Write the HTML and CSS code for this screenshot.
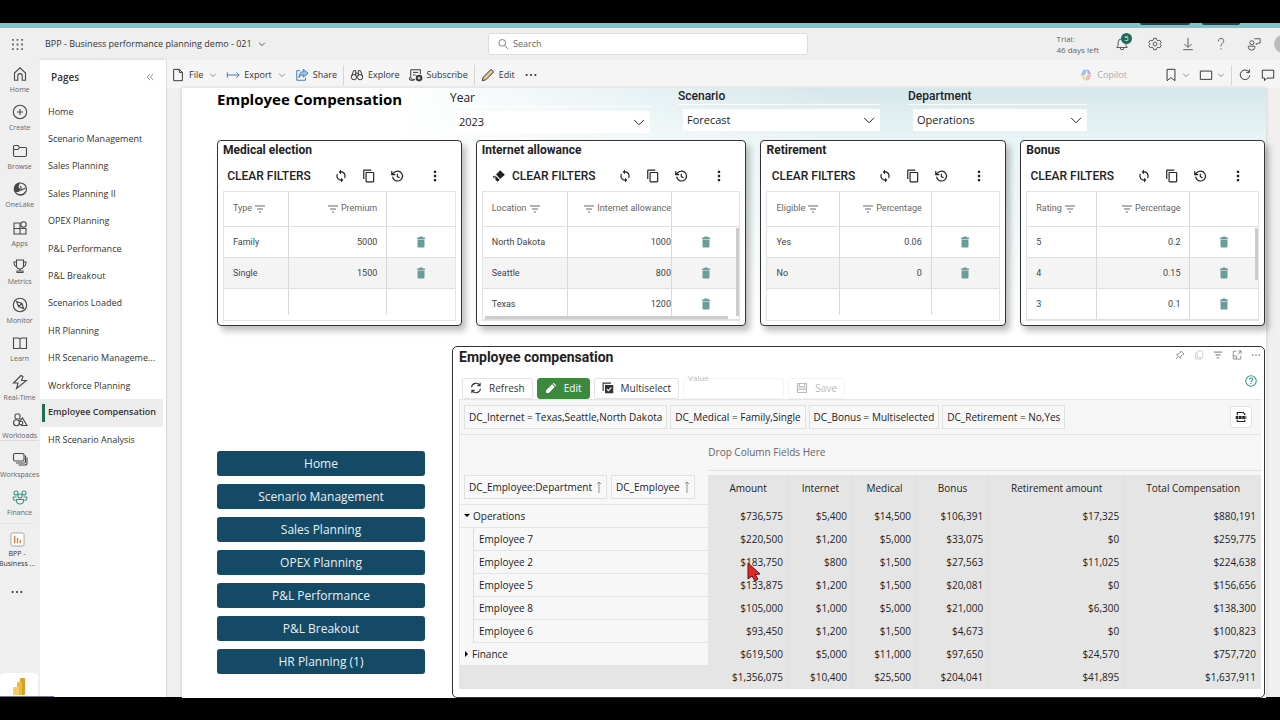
FILE: index.html
```html
<!DOCTYPE html>
<html lang="en">

<head>
  <meta charset="utf-8">
  <title>BPP - Business performance planning demo - 021</title>
  <meta name="viewport" content="width=device-width,initial-scale=1">
  <link rel="stylesheet" href="styles.css">
</head>

<body>
  <svg class="sprite" aria-hidden="true">
    <symbol id="i-chevron" viewBox="0 0 10 10"><path d="M1.5 3.5 5 7l3.5-3.5" /></symbol>
    <symbol id="i-filter" viewBox="0 0 12 12"><path d="M1 3h10M3 6h6M5 9h2" /></symbol>
    <symbol id="i-sync" viewBox="0 0 24 24"><path class="fill" d="M12 4V1L8 5l4 4V6c3.31 0 6 2.69 6 6 0 1.01-.25 1.97-.7 2.8l1.46 1.46C19.54 15.03 20 13.57 20 12c0-4.42-3.58-8-8-8zm0 14c-3.31 0-6-2.69-6-6 0-1.01.25-1.97.7-2.8L5.24 7.74C4.46 8.97 4 10.43 4 12c0 4.42 3.58 8 8 8v3l4-4-4-4v3z" /></symbol>
    <symbol id="i-copy" viewBox="0 0 24 24"><path class="fill" d="M16 1H4c-1.1 0-2 .9-2 2v14h2V3h12V1zm3 4H8c-1.1 0-2 .9-2 2v14c0 1.100.9 2 2 2h11c1.100 0 2-.9 2-2V7c0-1.100-.9-2-2-2zm0 16H8V7h11v14z" /></symbol>
    <symbol id="i-history" viewBox="0 0 24 24"><path d="M4.500 13a8.500 8.500 0 1 0 2.500-7L4 9M3 3.500V9.500h6M12.500 8v5l4 2" stroke-width="2" /></symbol>
    <symbol id="i-kebab" viewBox="0 0 24 24"><path class="fill" d="M10 3h4v4h-4zM10 10h4v4h-4zM10 17h4v4h-4z" /></symbol>
    <symbol id="i-trash" viewBox="0 0 24 24"><path class="fill" d="M5 21c0 1 1 2 2 2h10c1 0 2-1 2-2V7H5v14zM20 3h-4l-1-2H9L8 3H4v3h16V3z" /></symbol>
    <symbol id="i-people" viewBox="0 0 16 16"><circle cx="4" cy="4" r="2" /><circle cx="12" cy="4" r="2" /><circle cx="8" cy="7" r="2" /><path d="M4.500 10.500h7v1a3.500 3.500 0 0 1-7 0zM1 8h3.500M11.500 8H15M1 8c0 2 1 3.500 2.500 3.500M15 8c0 2-1 3.500-2.500 3.500" /></symbol>
    <symbol id="i-dots" viewBox="0 0 16 16"><circle class="fill" cx="3" cy="8" r="1.200" /><circle class="fill" cx="8" cy="8" r="1.200" /><circle class="fill" cx="13" cy="8" r="1.200" /></symbol>
    <symbol id="i-up" viewBox="0 0 6 12"><path d="M3 12V1M1 3l2-2 2 2" /></symbol>
  </svg>

  <div class="browser-edge"><span></span><span></span></div>

  <header class="topbar">
    <div class="topbar-left">
      <button class="icon-btn waffle" aria-label="App launcher">
        <svg viewBox="0 0 12 12"><path d="M0 0h2v2H0zM5 0h2v2H5zM10 0h2v2h-2zM0 5h2v2H0zM5 5h2v2H5zM10 5h2v2h-2zM0 10h2v2H0zM5 10h2v2H5zM10 10h2v2h-2z" /></svg>
      </button>
      <button class="report-name">BPP - Business performance planning demo - 021 <svg class="chev"><use href="#i-chevron" /></svg></button>
    </div>
    <label class="search">
      <svg class="ico" viewBox="0 0 16 16"><circle cx="7" cy="6.500" r="4.500" /><path d="m10.500 10 4 4.500" /></svg>
      <input type="search" placeholder="Search" aria-label="Search">
    </label>
    <div class="topbar-right">
      <p class="trial">Trial:<br>46 days left</p>
      <button class="icon-btn bell" aria-label="Notifications">
        <svg class="ico" viewBox="0 0 16 16"><path d="M2 12h12l-1.500-2.500V6.500a4.500 4.500 0 0 0-9 0v3zM6 12.500a2 2 0 0 0 4 0" /></svg>
        <span class="badge">5</span>
      </button>
      <button class="icon-btn" aria-label="Settings">
        <svg class="ico" viewBox="0 0 16 16"><circle cx="8" cy="8" r="2.200" /><path d="m6.500 1.500-.5 2-1.500.8-2-.6L1 6.300 2.500 8 1 9.700l1.500 2.600 2-.6 1.500.8.5 2h3l.5-2 1.500-.8 2 .6L15 9.700 13.500 8 15 6.300l-1.500-2.600-2 .6-1.500-.8-.5-2z" /></svg>
      </button>
      <button class="icon-btn" aria-label="Download">
        <svg class="ico" viewBox="0 0 16 16"><path d="M8 1v10.500M4 8l4 4 4-4M2.500 14.500h11" /></svg>
      </button>
      <button class="icon-btn" aria-label="Help">
        <svg class="ico" viewBox="0 0 16 16"><path d="M5 5c0-4.500 6.500-4.500 6 0C10.800 7 8 7.500 8 10.500M8 12.800v1.400" /></svg>
      </button>
      <button class="icon-btn" aria-label="Feedback">
        <svg class="ico" viewBox="0 0 16 16"><circle cx="5.500" cy="6.500" r="2.300" /><path d="M1.500 10.500H9v1.200a3.700 3.200 0 0 1-7.500 0zM8.500 2h6.500v5h-2.500L10.500 8.800V7" /></svg>
      </button>
      <span class="avatar"></span>
    </div>
  </header>

  <div class="workspace">
    <nav class="rail" aria-label="Main">
      <ul class="rail-list">
        <li><a href="#"><svg class="ico" viewBox="0 0 16 16"><path d="M2.500 7 8 1.800 13.500 7v7.200h-3.300V9.800a2.200 2.200 0 0 0-4.400 0v4.400H2.500z" /></svg>Home</a></li>
        <li><a href="#"><svg class="ico" viewBox="0 0 16 16"><circle cx="8" cy="8" r="6.700" /><path d="M8 5v6M5 8h6" /></svg>Create</a></li>
        <li><a href="#"><svg class="ico" viewBox="0 0 16 16"><path d="M1.500 3.500a1 1 0 0 1 1-1H6l1.500 2h6a1 1 0 0 1 1 1V12a1.500 1.500 0 0 1-1.500 1.500H3A1.500 1.500 0 0 1 1.500 12zM1.500 6.500H6l1.500-2" /></svg>Browse</a></li>
        <li><a href="#"><svg class="ico" viewBox="0 0 16 16"><circle cx="8.500" cy="8" r="6" /><path class="fill" d="M8 1.500C3 2 1 6 2 10c2 2 6 1 7-1L6.500 6zM5 13c4 1 8 0 9.500-4L13 12c-2 3-6 3-8 1z" /><path d="m8.500 5 1 4 4-2" /></svg>OneLake</a></li>
        <li><a href="#"><svg class="ico" viewBox="0 0 16 16"><path d="M2 3h6v5.500H2zM2 8.500h6V14H2zM8 8.500h6V14H8z" /><circle cx="11.500" cy="4.500" r="2.700" /></svg>Apps</a></li>
        <li><a href="#"><svg class="ico" viewBox="0 0 16 16"><path d="M4.500 2h7v5.500a3.500 3.500 0 0 1-7 0zM4.500 4H2c0 3 .8 4.500 3 4.500M11.500 4H14c0 3-.8 4.500-3 4.500M8 11v2M5 14.500h6V13H5z" /></svg>Metrics</a></li>
        <li><a href="#"><svg class="ico" viewBox="0 0 16 16"><circle cx="8" cy="8" r="6.700" /><path d="m4.500 4.500 5.500 2 1.500 5-5-2zM6.500 9.500l3.500-3" /></svg>Monitor</a></li>
        <li><a href="#"><svg class="ico" viewBox="0 0 16 16"><path d="M1.500 3h5L8 4l1.500-1h5v10.500h-5L8 13l-1.500.5h-5zM8 4v9" /></svg>Learn</a></li>
        <li><a href="#"><svg class="ico" viewBox="0 0 16 16"><path d="M9 1.500 1.500 9H6l-1.500 5.500L14.500 6.500H9.500l1.500-4z" /></svg>Real-Time</a></li>
        <li><a href="#"><svg class="ico" viewBox="0 0 16 16"><rect x="3" y="2" width="5" height="5" rx="1.500" /><circle cx="4.500" cy="10.800" r="3" /><path d="M9 13.500h6L10.500 6 7.500 9" /><circle cx="9" cy="11" r="1.800" /></svg>Workloads</a></li>
        <li class="ruled"><a href="#"><svg class="ico" viewBox="0 0 16 16"><rect x="1.500" y="2.500" width="10.500" height="7.500" rx="1.500" /><path d="M13.500 4.500v6a1.500 1.500 0 0 1-1.500 1.500H4M15 6.500v5.500a2 2 0 0 1-2 2H6.500" /></svg>Workspaces</a></li>
        <li class="finance"><a href="#"><svg class="ico"><use href="#i-people" /></svg>Finance</a></li>
      </ul>
      <a href="#" class="rail-report">
        <svg viewBox="0 0 16 16"><rect x="1" y="1" width="14" height="14" rx="2" fill="#fff" stroke="#a9a19a" /><path d="M5 4v8M8 6.500V12M11 8.500V12" stroke="#b98a4b" stroke-width="1.500" /></svg>
        <span>BPP -<br>Business ...</span>
      </a>
      <button class="icon-btn rail-more" aria-label="More"><svg class="ico"><use href="#i-dots" /></svg></button>
      <a href="#" class="power-bi" aria-label="Power BI">
        <svg viewBox="0 0 14 18"><rect x="8" y="1" width="5" height="17" rx="1" fill="#d9a02c" /><rect x="5" y="5" width="5" height="13" rx="1" fill="#e8bb45" /><rect x="1" y="10" width="6" height="8" rx="1" fill="#f5cf62" /></svg>
      </a>
    </nav>

    <aside class="pages">
      <header class="pages-head">
        <h2>Pages</h2>
        <button class="icon-btn" aria-label="Collapse pages"><svg viewBox="0 0 10 10"><path d="M5 1 1.500 5 5 9M9 1 5.500 5 9 9" /></svg></button>
      </header>
      <ul class="pages-list">
        <li><a href="#">Home</a></li>
        <li><a href="#">Scenario Management</a></li>
        <li><a href="#">Sales Planning</a></li>
        <li><a href="#">Sales Planning II</a></li>
        <li><a href="#">OPEX Planning</a></li>
        <li><a href="#">P&amp;L Performance</a></li>
        <li><a href="#">P&amp;L Breakout</a></li>
        <li><a href="#">Scenarios Loaded</a></li>
        <li><a href="#">HR Planning</a></li>
        <li><a href="#">HR Scenario Manageme...</a></li>
        <li><a href="#">Workforce Planning</a></li>
        <li class="active"><a href="#" aria-current="page">Employee Compensation</a></li>
        <li><a href="#">HR Scenario Analysis</a></li>
      </ul>
    </aside>

    <main class="report">
      <div class="commands">
        <button><svg class="ico" viewBox="0 0 16 16"><path d="M3 1.500h6.500L13 5v9.500H3zM9.500 1.500V5H13" /></svg>File <svg class="chev"><use href="#i-chevron" /></svg></button>
        <button><svg class="ico blue" viewBox="0 0 16 16"><path d="M1.500 5v6M1.500 8H15M12 5l3 3-3 3" /></svg>Export <svg class="chev"><use href="#i-chevron" /></svg></button>
        <button><svg class="ico blue" viewBox="0 0 16 16"><path d="M6 3H2v11h10v-3" /><path d="M9.500 1.500 15 6l-5.500 4.500V8C7 8 5.500 9 4.500 11 4.500 7 6 4.500 9.500 4z" fill="#9cc3e6" /></svg>Share</button>
        <span class="rule"></span>
        <button><svg class="ico" viewBox="0 0 16 16"><circle cx="4.500" cy="10.500" r="3" /><circle cx="11.500" cy="10.500" r="3" /><path d="M2 9 4 3h2.500v6M14 9l-2-6H9.500v6M6.500 6h3" /></svg>Explore</button>
        <button><svg class="ico" viewBox="0 0 16 16"><path d="M7 13H4a2 2 0 0 1-2-2V2h11v5M4.500 5h6M4.500 8h3M.5 10.500V12A2 2 0 0 0 3 14h3" /><circle class="fill" cx="11.500" cy="11.500" r="3.800" /><path d="M9.800 11.500h3.400M11.500 9.800v3.400" stroke="#fff" /></svg>Subscribe</button>
        <span class="rule"></span>
        <button><svg class="ico" viewBox="0 0 16 16"><path d="m1.500 14.500 1-4 9-9 3 3-9 9z" fill="#e2c48f" /></svg>Edit</button>
        <button class="icon-btn" aria-label="More options"><svg class="ico"><use href="#i-dots" /></svg></button>
        <div class="commands-end">
          <button class="copilot" disabled><svg viewBox="0 0 16 16"><path d="M5 2h4L7 8H2z" fill="#9fc0ec" /><path d="M9 2h2l3 5h-4z" fill="#b9a9e8" /><path d="M9 8h5l-3 6H7z" fill="#f2b8ab" /><path d="M2 8h4l2 6H5z" fill="#f3d9a2" /></svg>Copilot</button>
          <button class="icon-btn" aria-label="Bookmarks"><svg class="ico" viewBox="0 0 16 16"><path d="M3.500 1.500h9v13L8 11l-4.500 3.500z" /></svg><svg class="chev"><use href="#i-chevron" /></svg></button>
          <button class="icon-btn" aria-label="View"><svg class="ico" viewBox="0 0 16 16"><path d="M1.500 3.500h13v9.500h-13z" /></svg><svg class="chev"><use href="#i-chevron" /></svg></button>
          <span class="rule"></span>
          <button class="icon-btn" aria-label="Refresh"><svg class="ico" viewBox="0 0 16 16"><path d="M12.500 4.500a5.500 5.500 0 1 0 1 4M13 1.500V5H9.500" /></svg></button>
          <button class="icon-btn" aria-label="Comments"><svg class="ico" viewBox="0 0 16 16"><path d="M1.500 2.500h13v9H7L4 14.500v-3H1.500z" /></svg></button>
        </div>
      </div>

      <div class="canvas">
        <header class="canvas-head">
          <h1>Employee Compensation</h1>
          <div class="slicer slicer-year">
            <label for="year">Year</label>
            <div class="select"><select id="year"><option>2023</option></select><svg class="chev"><use href="#i-chevron" /></svg></div>
          </div>
          <div class="slicer">
            <label for="scenario">Scenario</label>
            <div class="select"><select id="scenario"><option>Forecast</option></select><svg class="chev"><use href="#i-chevron" /></svg></div>
          </div>
          <div class="slicer">
            <label for="department">Department</label>
            <div class="select"><select id="department"><option>Operations</option></select><svg class="chev"><use href="#i-chevron" /></svg></div>
          </div>
        </header>

        <div class="cards">
          <section class="card">
            <h2>Medical election</h2>
            <div class="card-tools">
              <button>CLEAR FILTERS</button>
              <button aria-label="Sync"><svg><use href="#i-sync" /></svg></button>
              <button aria-label="Copy"><svg><use href="#i-copy" /></svg></button>
              <button aria-label="History"><svg><use href="#i-history" /></svg></button>
              <button aria-label="More"><svg><use href="#i-kebab" /></svg></button>
            </div>
            <div class="grid-box">
              <table class="grid">
                <colgroup><col style="width:28%"><col><col class="col-del"></colgroup>
                <thead><tr><th>Type <svg><use href="#i-filter" /></svg></th><th class="num"><svg><use href="#i-filter" /></svg> Premium</th><th></th></tr></thead>
                <tbody>
                  <tr><td>Family</td><td class="num">5000</td><td class="del"><button aria-label="Delete"><svg><use href="#i-trash" /></svg></button></td></tr>
                  <tr><td>Single</td><td class="num">1500</td><td class="del"><button aria-label="Delete"><svg><use href="#i-trash" /></svg></button></td></tr>
                  <tr class="blank"><td></td><td></td><td></td></tr>
                </tbody>
              </table>
            </div>
          </section>

          <section class="card">
            <h2>Internet allowance</h2>
            <div class="card-tools">
              <button><svg viewBox="0 0 24 24"><path class="fill" d="m14 2 8 8-8 7-7-7.500zM5.500 11l7.500 7.500-3 3.500-4-3zM1 13l3.500-1.500v5z" /></svg>CLEAR FILTERS</button>
              <button aria-label="Sync"><svg><use href="#i-sync" /></svg></button>
              <button aria-label="Copy"><svg><use href="#i-copy" /></svg></button>
              <button aria-label="History"><svg><use href="#i-history" /></svg></button>
              <button aria-label="More"><svg><use href="#i-kebab" /></svg></button>
            </div>
            <div class="grid-box tight">
              <table class="grid">
                <colgroup><col style="width:33%"><col><col class="col-del"></colgroup>
                <thead><tr><th>Location <svg><use href="#i-filter" /></svg></th><th class="num"><svg><use href="#i-filter" /></svg> Internet allowance</th><th></th></tr></thead>
                <tbody>
                  <tr><td>North Dakota</td><td class="num">1000</td><td class="del"><button aria-label="Delete"><svg><use href="#i-trash" /></svg></button></td></tr>
                  <tr><td>Seattle</td><td class="num">800</td><td class="del"><button aria-label="Delete"><svg><use href="#i-trash" /></svg></button></td></tr>
                  <tr><td>Texas</td><td class="num">1200</td><td class="del"><button aria-label="Delete"><svg><use href="#i-trash" /></svg></button></td></tr>
                </tbody>
              </table>
              <span class="thumb-y"></span>
              <span class="thumb-x"></span>
            </div>
          </section>

          <section class="card">
            <h2>Retirement</h2>
            <div class="card-tools">
              <button>CLEAR FILTERS</button>
              <button aria-label="Sync"><svg><use href="#i-sync" /></svg></button>
              <button aria-label="Copy"><svg><use href="#i-copy" /></svg></button>
              <button aria-label="History"><svg><use href="#i-history" /></svg></button>
              <button aria-label="More"><svg><use href="#i-kebab" /></svg></button>
            </div>
            <div class="grid-box">
              <table class="grid">
                <colgroup><col style="width:31%"><col><col class="col-del"></colgroup>
                <thead><tr><th>Eligible <svg><use href="#i-filter" /></svg></th><th class="num"><svg><use href="#i-filter" /></svg> Percentage</th><th></th></tr></thead>
                <tbody>
                  <tr><td>Yes</td><td class="num">0.06</td><td class="del"><button aria-label="Delete"><svg><use href="#i-trash" /></svg></button></td></tr>
                  <tr><td>No</td><td class="num">0</td><td class="del"><button aria-label="Delete"><svg><use href="#i-trash" /></svg></button></td></tr>
                  <tr class="blank"><td></td><td></td><td></td></tr>
                </tbody>
              </table>
            </div>
          </section>

          <section class="card">
            <h2>Bonus</h2>
            <div class="card-tools">
              <button>CLEAR FILTERS</button>
              <button aria-label="Sync"><svg><use href="#i-sync" /></svg></button>
              <button aria-label="Copy"><svg><use href="#i-copy" /></svg></button>
              <button aria-label="History"><svg><use href="#i-history" /></svg></button>
              <button aria-label="More"><svg><use href="#i-kebab" /></svg></button>
            </div>
            <div class="grid-box">
              <table class="grid">
                <colgroup><col style="width:30%"><col><col class="col-del"></colgroup>
                <thead><tr><th>Rating <svg><use href="#i-filter" /></svg></th><th class="num"><svg><use href="#i-filter" /></svg> Percentage</th><th></th></tr></thead>
                <tbody>
                  <tr><td>5</td><td class="num">0.2</td><td class="del"><button aria-label="Delete"><svg><use href="#i-trash" /></svg></button></td></tr>
                  <tr><td>4</td><td class="num">0.15</td><td class="del"><button aria-label="Delete"><svg><use href="#i-trash" /></svg></button></td></tr>
                  <tr><td>3</td><td class="num">0.1</td><td class="del"><button aria-label="Delete"><svg><use href="#i-trash" /></svg></button></td></tr>
                </tbody>
              </table>
              <span class="thumb-y half"></span>
            </div>
          </section>
        </div>

        <div class="lower">
          <nav class="page-buttons" aria-label="Report pages">
            <a href="#">Home</a>
            <a href="#">Scenario Management</a>
            <a href="#">Sales Planning</a>
            <a href="#">OPEX Planning</a>
            <a href="#">P&amp;L Performance</a>
            <a href="#">P&amp;L Breakout</a>
            <a href="#">HR Planning (1)</a>
          </nav>

          <section class="panel">
            <header class="panel-head">
              <h2>Employee compensation</h2>
              <button class="icon-btn" aria-label="Pin"><svg class="ico" viewBox="0 0 16 16"><path d="m9.500 1.500 5 5-2 .5-3 3-.5 3.500-6.500-6.500L6 6.500l3-3zM5.500 10.500l-4 4" /></svg></button>
              <button class="icon-btn faint" aria-label="Copy visual"><svg class="ico" viewBox="0 0 16 16"><rect x="5" y="1.500" width="9" height="11" rx="2" /><path d="M5 3.500 2.500 5v9.500H11l1-2" /></svg></button>
              <button class="icon-btn" aria-label="Filters"><svg class="ico" viewBox="0 0 12 12"><path d="M1 2.500h10M3 6h6M4.500 9.500h3" /></svg></button>
              <button class="icon-btn" aria-label="Focus mode"><svg class="ico" viewBox="0 0 16 16"><path d="M7 2H2v12.500h12V9M9.500 1.500h5v5M14.500 1.500 9 7M2 9.500h5v5" /></svg></button>
              <button class="icon-btn" aria-label="More options"><svg class="ico"><use href="#i-dots" /></svg></button>
            </header>
            <div class="panel-tools">
              <button class="btn"><svg class="ico" viewBox="0 0 16 16"><path d="M2 7a6 6 0 0 1 11-2.500M14 9a6 6 0 0 1-11 2.500M13.500 1v4h-4M2.500 15v-4h4" /></svg>Refresh</button>
              <button class="btn primary"><svg viewBox="0 0 16 16"><path class="fill" d="M1.500 14.500V11L9.500 3 13 6.500l-8 8zM10.500 2l1-1 3.500 3.500-1 1z" /></svg>Edit</button>
              <button class="btn"><svg class="ico" viewBox="0 0 16 16"><path d="M12 1.500H1.500V12" /><path class="fill" d="M4 4h11v11H4z" /><path d="m6.500 9.500 2 2 4-4" stroke="#fff" /></svg>Multiselect</button>
              <div class="value-field"><label for="value">Value</label><input id="value" type="text" disabled></div>
              <button class="btn" disabled><svg class="ico" viewBox="0 0 16 16"><path d="M2 2h12v12H2zM4.500 2.500v4h7v-4M2 9.500h12" /></svg>Save</button>
              <button class="icon-btn help" aria-label="Help"><svg viewBox="0 0 16 16"><circle cx="8" cy="8" r="7" /><path d="M5.800 6.200c0-3 4.400-3 4.400 0C10.200 7.700 8 7.500 8 9.500M8 10.800v1.300" /></svg></button>
            </div>

            <div class="pivot">
              <div class="pivot-filters">
                <button class="chip">DC_Internet = Texas,Seattle,North Dakota</button>
                <button class="chip">DC_Medical = Family,Single</button>
                <button class="chip">DC_Bonus = Multiselected</button>
                <button class="chip">DC_Retirement = No,Yes</button>
                <button class="chip export" aria-label="Export"><svg class="ico" viewBox="0 0 16 16"><path d="M3 5.500V2h8l2 2v1.500M3 11.500V14h10v-2.500" stroke-width="1.500" /><path d="M1 8.500h14" stroke-width="4" stroke-dasharray="3.500 .8" /></svg></button>
              </div>
              <div class="pivot-drop"><span>Drop Column Fields Here</span></div>
              <table class="pivot-table">
                <colgroup><col class="c-name"><col class="c-amount"><col class="c-net"><col class="c-net"><col class="c-bonus"><col class="c-ret"><col></colgroup>
                <thead>
                  <tr>
                    <th><div class="fields"><button class="chip">DC_Employee:Department <svg><use href="#i-up" /></svg></button><button class="chip">DC_Employee <svg><use href="#i-up" /></svg></button></div></th>
                    <th>Amount</th><th>Internet</th><th>Medical</th><th>Bonus</th><th>Retirement amount</th><th>Total Compensation</th>
                  </tr>
                </thead>
                <tbody>
                  <tr><th class="group open">Operations</th><td>$736,575</td><td>$5,400</td><td>$14,500</td><td>$106,391</td><td>$17,325</td><td>$880,191</td></tr>
                  <tr><th class="leaf"><span>Employee 7</span></th><td>$220,500</td><td>$1,200</td><td>$5,000</td><td>$33,075</td><td>$0</td><td>$259,775</td></tr>
                  <tr><th class="leaf"><span>Employee 2</span></th><td class="pointed">$183,750<svg class="cursor" viewBox="0 0 14 20"><path d="M1 1v16l4-3 3 5 3-2-3-4.500 5-.5z" /></svg></td><td>$800</td><td>$1,500</td><td>$27,563</td><td>$11,025</td><td>$224,638</td></tr>
                  <tr><th class="leaf"><span>Employee 5</span></th><td>$133,875</td><td>$1,200</td><td>$1,500</td><td>$20,081</td><td>$0</td><td>$156,656</td></tr>
                  <tr><th class="leaf"><span>Employee 8</span></th><td>$105,000</td><td>$1,000</td><td>$5,000</td><td>$21,000</td><td>$6,300</td><td>$138,300</td></tr>
                  <tr><th class="leaf"><span>Employee 6</span></th><td>$93,450</td><td>$1,200</td><td>$1,500</td><td>$4,673</td><td>$0</td><td>$100,823</td></tr>
                  <tr><th class="group">Finance</th><td>$619,500</td><td>$5,000</td><td>$11,000</td><td>$97,650</td><td>$24,570</td><td>$757,720</td></tr>
                </tbody>
                <tfoot>
                  <tr><th></th><td>$1,356,075</td><td>$10,400</td><td>$25,500</td><td>$204,041</td><td>$41,895</td><td>$1,637,911</td></tr>
                </tfoot>
              </table>
            </div>
          </section>
        </div>
      </div>
    </main>
  </div>
</body>

</html>
```
FILE: styles.css
```css
* {
  box-sizing: border-box;
}

body {
  display: flex;
  flex-direction: column;
  height: 100vh;
  margin: 0;
  padding: 23px 0;
  overflow: hidden;
  background: #000;
  color: #333;
  font: 10px/14px "Segoe UI", "Open Sans", "Noto Sans", sans-serif;
}

h1, h2, p, ul {
  margin: 0;
  padding: 0;
}

ul {
  list-style: none;
}

a {
  color: inherit;
  text-decoration: none;
}

button, input, select {
  margin: 0;
  padding: 0;
  border: 0;
  background: none;
  color: inherit;
  font: inherit;
}

button {
  display: flex;
  align-items: center;
}

svg {
  flex: none;
  fill: none;
  stroke: currentColor;
}

.fill {
  fill: currentColor;
  stroke: none;
}

.sprite {
  position: absolute;
  width: 0;
  height: 0;
}

.ico {
  width: 14px;
  height: 14px;
  stroke-width: 1.1;
}

.chev {
  width: 8px;
  height: 8px;
}

.icon-btn {
  justify-content: center;
}

/* strip of the browser window above the app */
.browser-edge {
  display: flex;
  flex: none;
  justify-content: flex-end;
  gap: 12px;
  height: 5px;
  padding-right: 40px;
  background: #7bc5cf;
}

.browser-edge span {
  width: 50px;
  height: 2px;
  background: #23434d;
  border-radius: 0 0 4px 4px;
}

.browser-edge span:last-child {
  width: 38px;
}

/* top bar */
.topbar {
  display: grid;
  flex: none;
  grid-template-columns: 488fr 320fr 472fr;
  align-items: center;
  height: 32px;
  background: #efefef;
}

.topbar-left {
  display: flex;
  align-items: center;
}

.waffle {
  width: 34px;
  margin-right: 11px;
}

.waffle svg {
  width: 11px;
  height: 11px;
  fill: #666;
  stroke: none;
}

.report-name {
  gap: 6px;
  font-size: 9px;
}

.search {
  display: flex;
  align-items: center;
  gap: 4px;
  height: 22px;
  padding: 0 8px;
  border: 1px solid #ddd;
  border-radius: 3px;
  background: #fff;
  color: #666;
  font-size: 9px;
}

.search .ico {
  width: 12px;
  height: 12px;
}

.search input {
  flex: 1;
  min-width: 0;
  outline: 0;
}

.search input::placeholder {
  color: #666;
}

.topbar-right {
  display: flex;
  align-items: center;
  justify-content: flex-end;
  overflow: hidden;
}

.topbar-right .icon-btn {
  width: 33px;
  color: #555;
}

.trial {
  margin-right: 6px;
  color: #666;
  font-size: 8px;
  line-height: 11px;
}

.bell {
  position: relative;
}

.badge {
  position: absolute;
  top: -4px;
  right: 6px;
  width: 11px;
  height: 11px;
  border-radius: 50%;
  background: #1c6b5c;
  color: #fff;
  font-size: 7px;
  line-height: 11px;
}

.avatar {
  flex: none;
  width: 18px;
  height: 18px;
  margin: 0 -12px 0 4px;
  border-radius: 50%;
  background: #bbb;
}

/* left rail */
.workspace {
  display: flex;
  flex: 1;
  min-height: 0;
  background: #f1f0ef;
}

.rail {
  position: relative;
  display: flex;
  flex: none;
  flex-direction: column;
  align-items: center;
  width: 40px;
  padding-right: 6px;
  background: #efefef;
  color: #666;
  font-size: 7px;
  line-height: 9px;
}

.rail::after {
  position: absolute;
  bottom: 0;
  left: 0;
  z-index: 1;
  width: 54px;
  height: 1px;
  background: #77748f;
  content: "";
}

.rail-list {
  display: grid;
  grid-auto-rows: 1fr;
  width: 34px;
  height: 462px;
  margin-top: -5px;
}

.rail-list a {
  display: flex;
  flex-direction: column;
  align-items: center;
  justify-content: flex-end;
  gap: 3px;
  height: 100%;
}

.rail-list svg {
  width: 16px;
  height: 16px;
  color: #484848;
}

.ruled {
  border-top: 1px solid #e0d8da;
}

.rail-list .finance svg {
  color: #3f9485;
}

.rail-report {
  display: flex;
  flex-direction: column;
  align-items: center;
  gap: 2px;
  width: 34px;
  margin-top: 6px;
  padding-top: 8px;
  border-top: 1px solid #e2e2e2;
  color: #333;
  line-height: 10px;
  text-align: center;
  white-space: nowrap;
}

.rail-report svg {
  width: 15px;
  height: 15px;
}

.rail-more {
  margin-top: 16px;
  color: #333;
}

.power-bi {
  display: flex;
  align-items: flex-end;
  justify-content: center;
  width: 38px;
  height: 24px;
  margin: auto 0 0 4px;
  padding-bottom: 2px;
  border-radius: 4px 4px 0 0;
  background: #fff;
}

.power-bi svg {
  width: 14px;
  height: 18px;
  stroke: none;
}

/* pages pane */
.pages {
  flex: none;
  width: 127px;
  border-right: 1px solid #ddd;
  background: #fff;
  box-shadow: -1px 0 3px rgba(0, 0, 0, .15);
}

.pages-head {
  display: flex;
  align-items: center;
  justify-content: space-between;
  height: 38px;
  padding: 0 12px 4px 11px;
}

.pages-head h2 {
  font-size: 10px;
  font-weight: 600;
}

.pages-head svg {
  width: 8px;
  height: 8px;
  color: #777;
}

.pages-list {
  display: grid;
  grid-auto-rows: 1fr;
  height: 356px;
  padding-right: 3px;
  font-size: 9px;
}

.pages-list li {
  display: flex;
  align-items: center;
  padding-left: 8px;
  white-space: nowrap;
}

.pages-list .active {
  padding-left: 2px;
  background: #ececec;
  font-weight: 600;
}

.active a::before {
  display: inline-block;
  width: 3px;
  height: 18px;
  margin-right: 3px;
  background: #1f6b58;
  vertical-align: middle;
  content: "";
}

/* report */
.report {
  flex: 1;
  min-width: 0;
}

.commands {
  display: flex;
  align-items: center;
  gap: 9px;
  height: 28px;
  padding: 1px 5px 0 4px;
  background: #f5f5f5;
  font-size: 9px;
}

.commands button {
  gap: 4px;
}

.commands .chev {
  margin-left: 2px;
  color: #777;
}

.commands .blue {
  color: #3d78b5;
}

.rule {
  width: 1px;
  height: 20px;
  margin: 0 -3px;
  background: #d5d5d5;
}

.commands-end {
  display: flex;
  align-items: center;
  gap: 9px;
  margin-left: auto;
}

.commands-end .chev {
  margin-left: 0;
}

.commands-end .copilot {
  margin-right: 28px;
  color: #aaa;
}

.copilot svg {
  width: 14px;
  height: 14px;
  stroke: none;
}

.canvas {
  min-height: calc(100% - 28px);
  margin: 0 14px 0 15px;
  padding: 0 1px 0 35px;
  background:
    linear-gradient(to right, #fff 20%, rgba(255, 255, 255, 0) 60%),
    linear-gradient(to bottom, #d5e7eb, #e8f4f6 50px, #fff 250px);
  box-shadow: 0 0 4px rgba(0, 0, 0, .15);
}

.canvas-head {
  display: grid;
  grid-template-columns: 205fr 200fr 202fr 179fr 150fr;
  column-gap: 28px;
  height: 52px;
}

.canvas-head h1 {
  color: #000;
  font-size: 15px;
  font-weight: 700;
  line-height: 22px;
  white-space: nowrap;
}

.slicer {
  color: #222;
}

.slicer label {
  display: block;
  height: 17px;
  margin-bottom: 4px;
  border-bottom: 1px solid rgba(255, 255, 255, .8);
  font: 500 12px/16px Roboto, sans-serif;
}

.slicer-year {
  padding-top: 2px;
}

.slicer-year label {
  font: 12px/16px "Segoe UI", "Open Sans", "Noto Sans", sans-serif;
}

.select {
  position: relative;
  margin-left: 5px;
}

.select select {
  width: 100%;
  height: 22px;
  padding-left: 4px;
  appearance: none;
  background: #fff;
  font-size: 11px;
}

.select .chev {
  position: absolute;
  top: 4px;
  right: 4px;
  width: 14px;
  height: 14px;
  stroke-width: .7;
  pointer-events: none;
}

/* small data cards */
.cards {
  display: grid;
  grid-template-columns: 245fr 271fr 246fr 245fr;
  gap: 14px;
}

.card {
  min-width: 0;
  padding: 0 5px 4px;
  border: 1px solid #333;
  border-radius: 4px;
  background: #fff;
  box-shadow: 4px 5px 6px rgba(0, 0, 0, .25);
  font-family: Roboto, sans-serif;
}

.card h2 {
  color: #222;
  font-size: 12px;
  font-weight: 700;
  line-height: 19px;
}

.card-tools {
  display: flex;
  align-items: center;
  justify-content: flex-end;
  gap: 14px;
  height: 31px;
  padding-right: 14px;
  color: #222;
  font-size: 12px;
  font-weight: 500;
}

.card-tools button {
  gap: 6px;
}

.card-tools button:first-child {
  margin-right: 9px;
}

.card-tools button:last-child {
  margin-left: 10px;
}

.card-tools svg {
  width: 14px;
  height: 14px;
}

.grid-box {
  position: relative;
  height: 130px;
  border: 1px solid #e4e4e4;
}

.grid {
  width: 100%;
  border-collapse: collapse;
  table-layout: fixed;
  color: #444;
  font-size: 9px;
  line-height: 12px;
}

.col-del {
  width: 68px;
}

.grid th, .grid td {
  height: 31px;
  padding: 0 9px;
  border-bottom: 1px solid #e0e0e0;
  text-align: left;
  white-space: nowrap;
}

.grid th {
  height: 34px;
  color: #666;
  font-weight: 400;
}

.grid th + th, .grid td + td {
  border-left: 1px solid #d8d8d8;
}

.grid .num {
  text-align: right;
}

.tight .num {
  padding-right: 0;
}

.grid tbody tr:nth-child(2) {
  background: #f4f4f4;
}

.grid .blank td {
  height: 27px;
  border-bottom: 0;
}

.grid th svg {
  width: 12px;
  height: 12px;
  vertical-align: middle;
}

.grid .del {
  padding: 0;
  color: #6b9d98;
}

.del button {
  margin: 0 auto;
}

.del svg {
  width: 12px;
  height: 12px;
}

.thumb-y {
  position: absolute;
  top: 36px;
  right: 0;
  width: 3px;
  height: 88px;
  background: #ccc;
}

.thumb-y.half {
  height: 52px;
}

.thumb-x {
  position: absolute;
  right: 11px;
  bottom: 1px;
  left: 2px;
  height: 3px;
  background: #ccc;
}

/* lower part */
.lower {
  display: grid;
  grid-template-columns: 208fr 813fr;
  gap: 27px;
  margin-top: 20px;
}

.page-buttons {
  display: flex;
  flex-direction: column;
  gap: 8px;
  padding-top: 105px;
  color: #e8f1f5;
  font-size: 12px;
}

.page-buttons a {
  height: 25px;
  border-radius: 3px;
  background: #154a66;
  line-height: 26px;
  text-align: center;
}

.panel {
  min-width: 0;
  padding: 0 3px 8px 6px;
  border: 1px solid #333;
  border-radius: 5px;
  background: #fff;
}

.panel-head {
  display: flex;
  height: 20px;
  color: #666;
}

.panel-head h2 {
  flex: 1;
  color: #222;
  font: 700 14px/20px Roboto, sans-serif;
}

.panel-head .icon-btn {
  width: 19px;
  height: 16px;
}

.panel-head .icon-btn:last-child {
  margin-right: -4px;
}

.panel-head .ico {
  width: 10px;
  height: 10px;
}

.panel-head .faint {
  color: #bbb;
}

.panel-tools {
  display: flex;
  align-items: center;
  gap: 4px;
  height: 32px;
  padding: 10px 4px 0 3px;
}

.btn {
  gap: 7px;
  height: 21px;
  padding: 0 7px;
  border: 1px solid #e2e2e2;
  border-radius: 3px;
  background: #fff;
}

.btn svg {
  width: 12px;
  height: 12px;
  stroke-width: 1.5;
}

.btn.primary {
  border-color: #3d8a3e;
  background: #3d8a3e;
  color: #fff;
}

.btn:disabled {
  border-color: #f2f2f2;
  color: #bbb;
}

.value-field {
  position: relative;
  width: 101px;
  border: 1px solid #f4f4f4;
  border-radius: 3px;
}

.value-field label {
  position: absolute;
  top: -8px;
  left: 4px;
  color: #bbb;
  font-size: 8px;
}

.value-field input {
  width: 100%;
  height: 19px;
}

.help {
  margin: -14px 0 0 auto;
  color: #31988f;
}

.help svg {
  width: 12px;
  height: 12px;
  stroke-width: 1.4;
}

/* pivot */
.pivot {
  border: 1px solid #e6e6e6;
  border-width: 1px 0 0 1px;
  background: #f6f6f6;
  color: #222;
}

.pivot-filters {
  display: flex;
  align-items: center;
  gap: 3px;
  height: 35px;
  padding: 0 9px 0 4px;
  border-bottom: 1px solid #e4e4e4;
}

.chip {
  height: 24px;
  padding: 0 4px;
  border: 1px solid #e0e0e0;
  background: #f8f8f8;
  white-space: nowrap;
}

.chip > svg {
  width: 6px;
  height: 12px;
  margin-left: 4px;
  stroke: #777;
  stroke-width: .8;
}

.export {
  justify-content: center;
  width: 22px;
  height: 22px;
  margin-left: auto;
  border-radius: 3px;
  background: #fff;
}

.export .ico {
  width: 12px;
  height: 12px;
  margin: 0;
  stroke: #222;
}

.pivot-drop {
  display: flex;
  height: 40px;
  padding-left: 31%;
  color: #666;
  line-height: 35px;
}

.pivot-drop span {
  flex: 1;
  height: 36px;
  border-bottom: 1px solid #e0e0e0;
}

.pivot-table {
  width: 100%;
  border-collapse: collapse;
  table-layout: fixed;
}

.c-name { width: 31%; }
.c-amount { width: 10%; }
.c-net { width: 8%; }
.c-bonus { width: 9%; }
.c-ret { width: 17%; }

.pivot-table th, .pivot-table td {
  height: 23px;
  padding: 0 5px;
  border-right: 1px solid #dedede;
  background: #e5e5e5;
  font-weight: 400;
  text-align: right;
}

.pivot-table thead th {
  height: 29px;
  padding: 0 0 4px;
  text-align: center;
}

.pivot-table tr th:first-child {
  padding-right: 0;
  border: 0;
  border-bottom: 1px solid #e4e4e4;
  background: #f7f7f7;
  text-align: left;
}

.pivot-table tfoot tr th:first-child {
  border: 0;
  background: #e5e5e5;
}

.pivot-table tr :last-child {
  border-right: 0;
}

.pivot-table .fields {
  display: flex;
  gap: 4px;
  padding-left: 4px;
}

.pivot-table .fields .chip {
  border-right: 1px solid #e0e0e0;
}

.group::before {
  display: inline-block;
  margin: 0 4px 3px 0;
  border: 3px solid transparent;
  border-right-width: 0;
  border-left-color: #000;
  vertical-align: middle;
  content: "";
}

.group.open::before {
  margin: 0 3px 2px -1px;
  border-width: 3px 3px 0;
  border-color: #000 transparent;
}

.pivot-table tbody tr .leaf:first-child {
  padding-left: 13px;
  border-bottom: 0;
}

.leaf span {
  display: block;
  padding-left: 5px;
  border-bottom: 1px solid #e4e4e4;
}

.pivot-table .leaf span {
  border-left: 1px solid #dcdcdc;
  line-height: 22px;
}

.pointed {
  position: relative;
}

.cursor {
  position: absolute;
  top: 11px;
  left: 39px;
  z-index: 1;
  width: 14px;
  height: 20px;
  fill: #e8242b;
  stroke: #5b1414;
}
```
